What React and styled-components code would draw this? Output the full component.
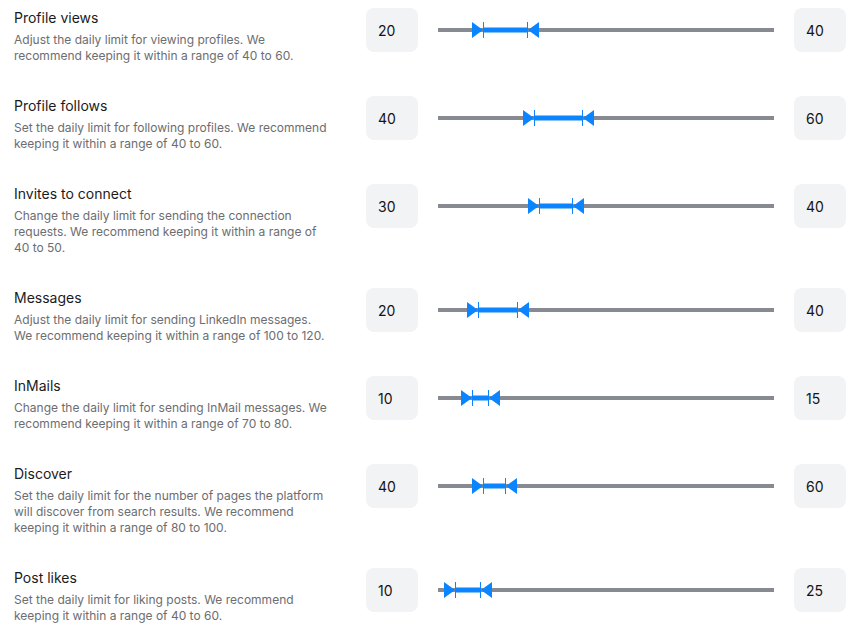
import React from "react";
import styled, { createGlobalStyle } from "styled-components";

const GlobalStyle = createGlobalStyle`
  html, body { margin: 0; padding: 0; background: #ffffff; }
  body { font-family: Inter, "Noto Sans", Arial, sans-serif; -webkit-font-smoothing: antialiased; }
  * { box-sizing: border-box; }
`;

const Page = styled.div`
  display: flex;
  flex-direction: column;
  gap: 32px;
  padding: 8px 7px 16px 14px;
`;

const Row = styled.div`
  display: grid;
  grid-template-columns: 332px 52px 336px 52px;
  column-gap: 20px;
  align-items: start;
`;

const Info = styled.div`
  display: flex;
  flex-direction: column;
  gap: 4px;
`;

const Title = styled.div`
  font-size: 14px;
  line-height: 20px;
  color: #1b1b1d;
  font-weight: 400;
`;

const Desc = styled.div`
  font-size: 12px;
  line-height: 16px;
  color: #6c6d70;
`;

const Line = styled.span`
  display: block;
  white-space: nowrap;
`;

const ValueBox = styled.div`
  height: 44px;
  width: 52px;
  border-radius: 8px;
  background: #f2f3f5;
  display: flex;
  align-items: center;
  padding-left: 12px;
  font-size: 14px;
  color: #141414;
`;

const SliderArea = styled.div`
  height: 44px;
  display: flex;
  align-items: center;
`;

const Track = styled.div`
  position: relative;
  width: 100%;
  height: 4px;
  background: #878a90;
`;

const Fill = styled.div`
  position: absolute;
  top: 50%;
  height: 5px;
  transform: translateY(-50%);
  background: #0a84ff;
`;

const Thumb = styled.div`
  position: absolute;
  top: 50%;
  width: 12px;
  height: 16px;
  transform: translateY(-50%);
  margin-left: ${(p) => (p.$side === "left" ? "-11px" : "-0.5px")};
  display: flex;
  flex-direction: ${(p) => (p.$side === "left" ? "row" : "row-reverse")};
  align-items: stretch;

  &::before {
    content: "";
    width: 0;
    height: 0;
    border-top: 8px solid transparent;
    border-bottom: 8px solid transparent;
    ${(p) =>
      p.$side === "left"
        ? "border-left: 11px solid #0a84ff;"
        : "border-right: 11px solid #0a84ff;"}
  }
  &::after {
    content: "";
    width: 1px;
    background: #0a84ff;
  }
`;

const rows = [
  {
    title: "Profile views",
    lines: [
      "Adjust the daily limit for viewing profiles. We",
      "recommend keeping it within a range of 40 to 60.",
    ],
    min: 20,
    max: 40,
    scale: 150,
  },
  {
    title: "Profile follows",
    lines: [
      "Set the daily limit for following profiles. We recommend",
      "keeping it within a range of 40 to 60.",
    ],
    min: 40,
    max: 60,
    scale: 140,
  },
  {
    title: "Invites to connect",
    lines: [
      "Change the daily limit for sending the connection",
      "requests. We recommend keeping it within a range of",
      "40 to 50.",
    ],
    min: 30,
    max: 40,
    scale: 100,
  },
  {
    title: "Messages",
    lines: [
      "Adjust the daily limit for sending LinkedIn messages.",
      "We recommend keeping it within a range of 100 to 120.",
    ],
    min: 20,
    max: 40,
    scale: 170,
  },
  {
    title: "InMails",
    lines: [
      "Change the daily limit for sending InMail messages. We",
      "recommend keeping it within a range of 70 to 80.",
    ],
    min: 10,
    max: 15,
    scale: 100,
  },
  {
    title: "Discover",
    lines: [
      "Set the daily limit for the number of pages the platform",
      "will discover from search results. We recommend",
      "keeping it within a range of 80 to 100.",
    ],
    min: 40,
    max: 60,
    scale: 300,
  },
  {
    title: "Post likes",
    lines: [
      "Set the daily limit for liking posts. We recommend",
      "keeping it within a range of 40 to 60.",
    ],
    min: 10,
    max: 25,
    scale: 200,
  },
];

function RangeSlider({ min, max, scale }) {
  const a = (min / scale) * 100;
  const b = (max / scale) * 100;
  return (
    <SliderArea>
      <Track>
        <Fill style={{ left: `${a}%`, width: `${b - a}%` }} />
        <Thumb $side="left" style={{ left: `${a}%` }} />
        <Thumb $side="right" style={{ left: `${b}%` }} />
      </Track>
    </SliderArea>
  );
}

export default function App() {
  return (
    <>
      <GlobalStyle />
      <Page>
        {rows.map((r) => (
          <Row key={r.title}>
            <Info>
              <Title>{r.title}</Title>
              <Desc>
                {r.lines.map((l) => (
                  <Line key={l}>{l}</Line>
                ))}
              </Desc>
            </Info>
            <ValueBox>{r.min}</ValueBox>
            <RangeSlider min={r.min} max={r.max} scale={r.scale} />
            <ValueBox>{r.max}</ValueBox>
          </Row>
        ))}
      </Page>
    </>
  );
}
